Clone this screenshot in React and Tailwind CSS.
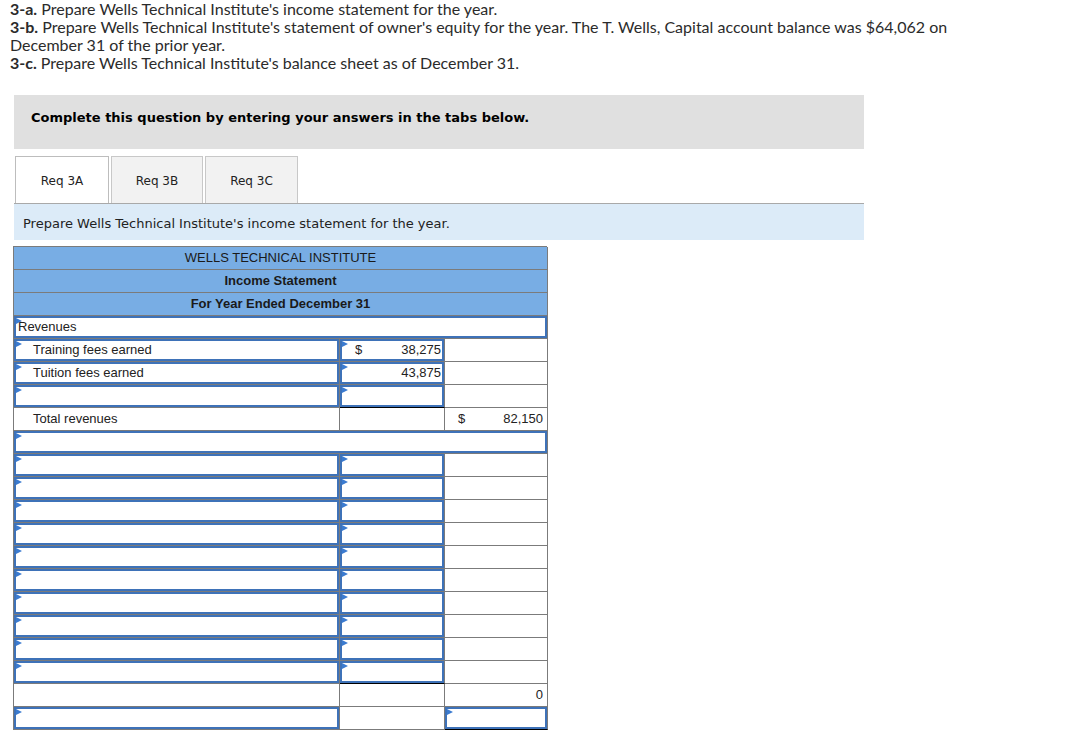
import React from 'react';

const Marker = () => (
    <span className="absolute left-0 top-0 w-0 h-0 border-y-[3px] border-y-transparent border-l-[6px] border-l-[#3b7bd0]" />
);

const Input = ({ children, className = '' }) => (
    <div className={`relative h-full border-2 border-[#3e72b8] flex items-center ${className}`}>
        <Marker />
        {children}
    </div>
);

const Cell = ({ w, children, className = '' }) => (
    <div className={`${w} h-[23px] border-r border-b border-[#7b7b7b] shrink-0 ${className}`}>{children}</div>
);

const C1 = 'w-[326px]';
const C2 = 'w-[105px]';
const C3 = 'w-[103px]';

const Amount = ({ sign, value }) => (
    <div className="flex w-full justify-between pl-[13px] pr-[1px]">
        <span>{sign}</span>
        <span>{value}</span>
    </div>
);

const App = () => {
    const blankRows = Array.from({ length: 10 });

    return (
        <div className="min-h-screen bg-white text-[#222]">
            <div className="px-[10px] max-w-[960px] font-['Lato',sans-serif] text-[16px] leading-[18px] text-[#2b2b2b]">
                <p><b>3-a.</b> Prepare Wells Technical Institute's income statement for the year.</p>
                <p><b>3-b.</b> Prepare Wells Technical Institute's statement of owner's equity for the year. The T. Wells, Capital account balance was $64,062 on December 31 of the prior year.</p>
                <p><b>3-c.</b> Prepare Wells Technical Institute's balance sheet as of December 31.</p>
            </div>

            <div className="ml-[14px] mt-[23px] w-[850px] font-['DejaVu_Sans',Verdana,sans-serif]">
                <div className="h-[54px] bg-[#e0e0e0] pt-[14px] pl-[17px] text-[13px] leading-[17px] font-bold text-black">
                    Complete this question by entering your answers in the tabs below.
                </div>

                <div className="mt-[7px] flex gap-[2px] pl-px text-[12px] text-[#222]">
                    <div className="w-[94px] h-[47px] pt-[2px] border border-b-0 border-[#bdbdbd] bg-white flex items-center justify-center">Req 3A</div>
                    <div className="w-[92px] h-[47px] pt-[2px] border border-b-0 border-[#c8c8c8] bg-[#f2f2f2] flex items-center justify-center">Req 3B</div>
                    <div className="w-[93px] h-[47px] pt-[2px] border border-b-0 border-[#c8c8c8] bg-[#f2f2f2] flex items-center justify-center">Req 3C</div>
                </div>

                <div className="h-[37px] pt-[3px] bg-[#dcebf8] border-t border-[#a9a9a9] flex items-center pl-[9px] text-[13px] text-[#222]">
                    Prepare Wells Technical Institute's income statement for the year.
                </div>
            </div>

            <div className="ml-[13px] mt-[6px] w-[534px] border-l border-t border-[#7b7b7b] font-['Liberation_Sans',Arial,sans-serif] text-[13px] text-[#222]">
                <div className="flex"><Cell w="w-[534px]" className="bg-[#78ade4] flex items-center justify-center text-[#1a1a1a]">WELLS TECHNICAL INSTITUTE</Cell></div>
                <div className="flex"><Cell w="w-[534px]" className="bg-[#78ade4] flex items-center justify-center font-bold text-[#1a1a1a]">Income Statement</Cell></div>
                <div className="flex"><Cell w="w-[534px]" className="bg-[#78ade4] flex items-center justify-center font-bold text-[#1a1a1a]">For Year Ended December 31</Cell></div>

                <div className="flex"><Cell w="w-[534px]"><Input className="pl-[2px]">Revenues</Input></Cell></div>

                <div className="flex">
                    <Cell w={C1}><Input className="pl-[17px]">Training fees earned</Input></Cell>
                    <Cell w={C2}><Input><Amount sign="$" value="38,275" /></Input></Cell>
                    <Cell w={C3} />
                </div>
                <div className="flex">
                    <Cell w={C1}><Input className="pl-[17px]">Tuition fees earned</Input></Cell>
                    <Cell w={C2}><Input><Amount sign="" value="43,875" /></Input></Cell>
                    <Cell w={C3} />
                </div>
                <div className="flex">
                    <Cell w={C1}><Input /></Cell>
                    <Cell w={C2} className="border-b-black"><Input /></Cell>
                    <Cell w={C3} />
                </div>
                <div className="flex">
                    <Cell w={C1} className="flex items-center pl-[19px]">Total revenues</Cell>
                    <Cell w={C2} />
                    <Cell w={C3} className="flex items-center pr-[3px]"><Amount sign="$" value="82,150" /></Cell>
                </div>

                <div className="flex"><Cell w="w-[534px]"><Input /></Cell></div>

                {blankRows.map((_, i) => (
                    <div className="flex" key={i}>
                        <Cell w={C1}><Input /></Cell>
                        <Cell w={C2} className={i === blankRows.length - 1 ? 'border-b-black' : ''}><Input /></Cell>
                        <Cell w={C3} />
                    </div>
                ))}

                <div className="flex">
                    <Cell w={C1} />
                    <Cell w={C2} />
                    <Cell w={C3} className="flex items-center justify-end pr-[4px]">0</Cell>
                </div>
                <div className="flex">
                    <Cell w={C1}><Input /></Cell>
                    <Cell w={C2} />
                    <Cell w={C3} className="border-b-black"><Input /></Cell>
                </div>
            </div>
        </div>
    );
};

export default App;
